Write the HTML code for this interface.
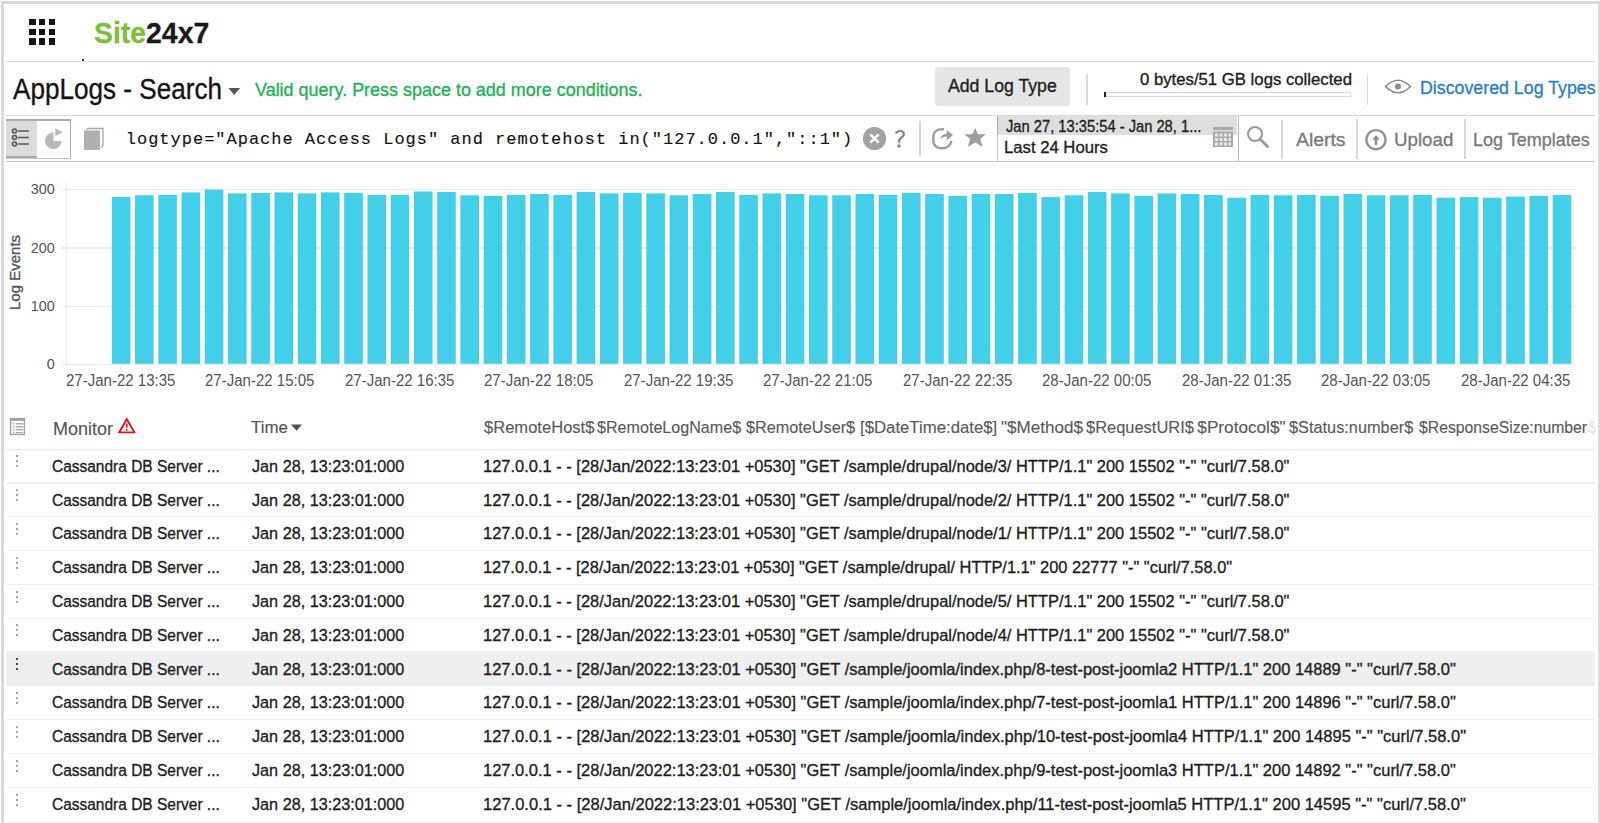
<!DOCTYPE html><html><head><meta charset="utf-8"><style>
html,body{margin:0;padding:0;background:#fff;width:1600px;height:823px;overflow:hidden;position:relative;font-family:"Liberation Sans",sans-serif}
.t{position:absolute;white-space:nowrap;line-height:1;transform-origin:0 0;-webkit-text-stroke-width:0.35px}
.a{position:absolute}
</style></head><body>
<div class="a" style="left:1px;top:1px;width:3px;height:822px;background:#d9d9d9"></div><div class="a" style="left:1px;top:1px;width:1599px;height:3px;background:#d9d9d9"></div><div class="a" style="left:1598px;top:1px;width:2px;height:822px;background:#d9d9d9"></div><div class="a" style="left:29px;top:18.7px;width:6.5px;height:6.4px;background:#151515"></div><div class="a" style="left:38.9px;top:18.7px;width:6.5px;height:6.4px;background:#151515"></div><div class="a" style="left:48.6px;top:18.7px;width:6.5px;height:6.4px;background:#151515"></div><div class="a" style="left:29px;top:28.5px;width:6.5px;height:6.4px;background:#151515"></div><div class="a" style="left:38.9px;top:28.5px;width:6.5px;height:6.4px;background:#151515"></div><div class="a" style="left:48.6px;top:28.5px;width:6.5px;height:6.4px;background:#151515"></div><div class="a" style="left:29px;top:38.3px;width:6.5px;height:6.4px;background:#151515"></div><div class="a" style="left:38.9px;top:38.3px;width:6.5px;height:6.4px;background:#151515"></div><div class="a" style="left:48.6px;top:38.3px;width:6.5px;height:6.4px;background:#151515"></div><div class="t" style="left:93.65px;top:17.90px;font-size:30px;color:#1a1a1a;font-weight:700;transform:scaleX(0.9464);"><span style="color:#7dbf3b">Site</span>24x7</div>
<div class="a" style="left:82px;top:59px;width:2px;height:2px;background:#333"></div><div class="a" style="left:6px;top:60.5px;width:1589px;height:1px;background:#dcdcdc"></div><div class="t" style="left:13.00px;top:74.03px;font-size:29.5px;color:#151515;font-weight:400;transform:scaleX(0.8850);">AppLogs - Search</div>
<svg class="a" style="left:228px;top:87px" width="13" height="9"><path d="M0.5 1 L12 1 L6.25 8 Z" fill="#555"/></svg><div class="t" style="left:255.02px;top:79.62px;font-size:19px;color:#22b257;font-weight:400;transform:scaleX(0.9449);">Valid query. Press space to add more conditions.</div>
<div class="a" style="left:934.5px;top:67px;width:135.5px;height:39px;background:#e6e6e6;border-radius:3px"></div><div class="t" style="left:948.00px;top:76.42px;font-size:19px;color:#1e1e1e;font-weight:400;transform:scaleX(0.9303);">Add Log Type</div>
<div class="a" style="left:1086.2px;top:74.4px;width:1.7px;height:30.3px;background:#dadada"></div><div class="t" style="left:1140.13px;top:71.41px;font-size:17px;color:#1e1e1e;font-weight:400;transform:scaleX(0.9837);">0 bytes/51 GB logs collected</div>
<div class="a" style="left:1104px;top:92px;width:245px;height:3px;border:1px solid #d8d8d8;background:#fff"></div><div class="a" style="left:1104px;top:92px;width:2px;height:5px;background:#222"></div><div class="a" style="left:1366.6px;top:74.6px;width:1.6px;height:30.4px;background:#d8d8d8"></div><svg class="a" style="left:1384px;top:78px" width="28" height="17" viewBox="0 0 28 17"><path d="M1.5 8.5 Q14 -4 26.5 8.5 Q14 21 1.5 8.5 Z" fill="none" stroke="#8a8a8a" stroke-width="1.6"/><circle cx="14" cy="8.5" r="3" fill="#8a8a8a"/></svg><div class="t" style="left:1419.88px;top:77.62px;font-size:19px;color:#2f7fc6;font-weight:400;transform:scaleX(0.9356);">Discovered Log Types</div>
<div class="a" style="left:6px;top:114.5px;width:1589px;height:1.2px;background:#d8d8d8"></div><div class="a" style="left:6px;top:119px;width:64px;height:37px;border-top:2px solid #ababab;border-right:1px solid #b0b0b0;border-bottom:1.5px solid #c4c4c4;background:#fff"></div><div class="a" style="left:6px;top:121px;width:31px;height:35px;background:#dcdcdc;border-bottom:2px solid #ababab"></div><svg class="a" style="left:11px;top:127px" width="20" height="22" viewBox="0 0 20 22"><g fill="none" stroke="#555" stroke-width="1.6"><circle cx="3.5" cy="4" r="2"/><circle cx="3.5" cy="10.5" r="2"/><circle cx="3.5" cy="17" r="2"/><path d="M7 4h11M7 10.5h11M7 17h11"/></g></svg><svg class="a" style="left:44px;top:127px" width="20" height="22" viewBox="0 0 20 22"><path d="M9.5 5.5 A8.3 8.3 0 1 0 17.6 14 L9.5 14 Z" fill="#b9b9b9"/><path d="M11.3 1 L11.3 9.3 L18.5 5.5 Z" fill="#b9b9b9"/></svg><svg class="a" style="left:82px;top:127px" width="24" height="25" viewBox="0 0 24 25"><path d="M4 3 L6 1.5 L21 1.5 L21 19 L19 21" fill="none" stroke="#a8a8a8" stroke-width="1.3"/><rect x="2" y="3.5" width="16" height="19.5" fill="#b0b0b0"/></svg><div class="t" style="left:125.8px;top:131px;font-family:'Liberation Mono',monospace;font-size:17px;letter-spacing:0.99px;color:#111;-webkit-text-stroke:0.12px #111">logtype="Apache Access Logs" and remotehost in("127.0.0.1","::1")</div><svg class="a" style="left:862px;top:126px" width="25" height="25" viewBox="0 0 25 25"><circle cx="12.5" cy="12.5" r="11.6" fill="#a2a2a2"/><path d="M8.3 8.3 L16.7 16.7 M16.7 8.3 L8.3 16.7" stroke="#fff" stroke-width="2.6"/></svg><svg class="a" style="left:893px;top:128px" width="14" height="22" viewBox="0 0 14 22"><path d="M3.2 4.6 Q6 2.2 8.5 3 Q11.2 4 10.8 6.6 Q10.3 8.6 7.8 10.1 Q5.6 11.6 6.1 13.8" fill="none" stroke="#8a8a8a" stroke-width="2.3" stroke-linecap="round"/><circle cx="6" cy="18" r="1.8" fill="#8a8a8a"/></svg><div class="a" style="left:919px;top:121px;width:1.5px;height:35px;background:#d5d5d5"></div><svg class="a" style="left:930px;top:126px" width="25" height="25" viewBox="0 0 25 25"><path d="M14 3.3 Q3.6 2.6 3.3 11 L3.3 14.5 Q3.6 22 11.5 22.3 Q19.5 22.5 21.6 15" fill="none" stroke="#9d9d9d" stroke-width="2.4"/><path d="M10 13 Q12 7.6 16.8 7.5 L16.8 3.9 L23 9 L16.8 14.3 L16.8 10.6 Q13 10.6 10 13 Z" fill="#9d9d9d"/></svg><svg class="a" style="left:963px;top:127px" width="24" height="22" viewBox="0 0 24 22"><path d="M12.2 0.8 L14.9 7.3 L22.6 7.3 L17.3 12 L19.5 19.8 L12.2 15.4 L4.9 19.8 L7.1 12 L1.4 7.3 L9.5 7.3 Z" fill="#9d9d9d"/></svg><div class="a" style="left:997px;top:116px;width:240px;height:44.5px;border-left:1px solid #c8c8c8;border-right:1px solid #b8b8b8;background:#fff"></div><div class="a" style="left:998px;top:116px;width:239px;height:18.5px;background:#dedede"></div><div class="t" style="left:1005.71px;top:118.81px;font-size:15.7px;color:#1e1e1e;font-weight:400;transform:scaleX(0.9375);">Jan 27, 13:35:54 - Jan 28, 1...</div>
<div class="t" style="left:1003.66px;top:139.27px;font-size:17.4px;color:#1e1e1e;font-weight:400;transform:scaleX(0.9594);">Last 24 Hours</div>
<div class="a" style="left:997px;top:116px;width:1px;height:18.5px;background:#a8a8a8"></div><svg class="a" style="left:1212px;top:125px" width="22" height="23" viewBox="0 0 22 23"><rect x="1" y="2" width="20" height="3" fill="#aaa"/><rect x="1" y="6.5" width="20" height="15.5" fill="#aaa"/><g fill="#e8e8e8"><rect x="3" y="8.5" width="3" height="3"/><rect x="7.5" y="8.5" width="3" height="3"/><rect x="12" y="8.5" width="3" height="3"/><rect x="16.5" y="8.5" width="2.5" height="3"/><rect x="3" y="13" width="3" height="3"/><rect x="7.5" y="13" width="3" height="3"/><rect x="12" y="13" width="3" height="3"/><rect x="16.5" y="13" width="2.5" height="3"/><rect x="3" y="17.5" width="3" height="3"/><rect x="7.5" y="17.5" width="3" height="3"/><rect x="12" y="17.5" width="3" height="3"/><rect x="16.5" y="17.5" width="2.5" height="3"/></g></svg><svg class="a" style="left:1246px;top:125px" width="24" height="24" viewBox="0 0 24 24"><circle cx="9" cy="9" r="7" fill="none" stroke="#9a9a9a" stroke-width="2"/><path d="M14 14 L21.5 21.5" stroke="#9a9a9a" stroke-width="3" stroke-linecap="round"/></svg><div class="a" style="left:1281.2px;top:119.8px;width:1.5px;height:39.2px;background:#d8d8d8"></div><div class="t" style="left:1295.60px;top:130.42px;font-size:19px;color:#7a7a7a;font-weight:400;transform:scaleX(1.0192);">Alerts</div>
<div class="a" style="left:1356px;top:119px;width:1.5px;height:40px;background:#d8d8d8"></div><svg class="a" style="left:1364px;top:127.5px" width="24" height="24" viewBox="0 0 24 24"><circle cx="12" cy="11.7" r="9.6" fill="none" stroke="#959595" stroke-width="2.4"/><path d="M12 16.8 V10" stroke="#8a8a8a" stroke-width="2.6"/><path d="M8 11.4 L12 7.2 L16 11.4 Z" fill="#8a8a8a"/></svg><div class="t" style="left:1394.10px;top:130.42px;font-size:19px;color:#7a7a7a;font-weight:400;transform:scaleX(0.9847);">Upload</div>
<div class="a" style="left:1464.2px;top:119px;width:1.5px;height:40px;background:#d8d8d8"></div><div class="t" style="left:1472.96px;top:130.42px;font-size:19px;color:#7a7a7a;font-weight:400;transform:scaleX(0.9469);">Log Templates</div>
<div class="a" style="left:6px;top:161px;width:1589px;height:1.2px;background:#c8c8c8"></div><div class="a" style="left:61px;top:188.75px;width:1515px;height:1.5px;background:#ebebeb"></div><div class="t" style="left:30.73px;top:182.41px;font-size:14.4px;color:#555;font-weight:400;-webkit-text-stroke-width:0;">300</div>
<div class="a" style="left:61px;top:247.25px;width:1515px;height:1.5px;background:#ebebeb"></div><div class="t" style="left:30.73px;top:240.91px;font-size:14.4px;color:#555;font-weight:400;-webkit-text-stroke-width:0;">200</div>
<div class="a" style="left:61px;top:305.75px;width:1515px;height:1.5px;background:#ebebeb"></div><div class="t" style="left:30.73px;top:299.41px;font-size:14.4px;color:#555;font-weight:400;-webkit-text-stroke-width:0;">100</div>
<div class="a" style="left:61px;top:363.55px;width:1515px;height:1.5px;background:#ebebeb"></div><div class="t" style="left:46.71px;top:357.21px;font-size:14.4px;color:#555;font-weight:400;-webkit-text-stroke-width:0;">0</div>
<div class="a" style="left:65.75px;top:182px;width:1.5px;height:183px;background:#ebebeb"></div><div class="t" style="left:6.8px;top:309.5px;font-size:15px;color:#555;transform:rotate(-90deg);transform-origin:0 0">Log Events</div><svg class="a" style="left:61px;top:180px" width="1530" height="190"><g fill="#43cfe8"><rect x="50.80" y="16.90" width="18.6" height="166.90"/><rect x="74.04" y="15.25" width="18.6" height="168.55"/><rect x="97.28" y="14.90" width="18.6" height="168.90"/><rect x="120.52" y="12.40" width="18.6" height="171.40"/><rect x="143.76" y="9.60" width="18.6" height="174.20"/><rect x="167.00" y="13.40" width="18.6" height="170.40"/><rect x="190.24" y="13.00" width="18.6" height="170.80"/><rect x="213.48" y="12.40" width="18.6" height="171.40"/><rect x="236.72" y="13.40" width="18.6" height="170.40"/><rect x="259.96" y="12.40" width="18.6" height="171.40"/><rect x="283.20" y="12.80" width="18.6" height="171.00"/><rect x="306.44" y="14.90" width="18.6" height="168.90"/><rect x="329.68" y="14.90" width="18.6" height="168.90"/><rect x="352.92" y="11.50" width="18.6" height="172.30"/><rect x="376.16" y="11.90" width="18.6" height="171.90"/><rect x="399.40" y="15.30" width="18.6" height="168.50"/><rect x="422.64" y="15.80" width="18.6" height="168.00"/><rect x="445.88" y="14.90" width="18.6" height="168.90"/><rect x="469.12" y="14.00" width="18.6" height="169.80"/><rect x="492.36" y="14.90" width="18.6" height="168.90"/><rect x="515.60" y="11.90" width="18.6" height="171.90"/><rect x="538.84" y="13.40" width="18.6" height="170.40"/><rect x="562.08" y="12.80" width="18.6" height="171.00"/><rect x="585.32" y="13.40" width="18.6" height="170.40"/><rect x="608.56" y="15.30" width="18.6" height="168.50"/><rect x="631.80" y="14.00" width="18.6" height="169.80"/><rect x="655.04" y="11.90" width="18.6" height="171.90"/><rect x="678.28" y="14.90" width="18.6" height="168.90"/><rect x="701.52" y="13.40" width="18.6" height="170.40"/><rect x="724.76" y="14.00" width="18.6" height="169.80"/><rect x="748.00" y="15.30" width="18.6" height="168.50"/><rect x="771.24" y="15.30" width="18.6" height="168.50"/><rect x="794.48" y="14.00" width="18.6" height="169.80"/><rect x="817.72" y="14.90" width="18.6" height="168.90"/><rect x="840.96" y="12.80" width="18.6" height="171.00"/><rect x="864.20" y="14.00" width="18.6" height="169.80"/><rect x="887.44" y="15.80" width="18.6" height="168.00"/><rect x="910.68" y="14.00" width="18.6" height="169.80"/><rect x="933.92" y="14.00" width="18.6" height="169.80"/><rect x="957.16" y="13.00" width="18.6" height="170.80"/><rect x="980.40" y="17.10" width="18.6" height="166.70"/><rect x="1003.64" y="15.30" width="18.6" height="168.50"/><rect x="1026.88" y="11.90" width="18.6" height="171.90"/><rect x="1050.12" y="13.40" width="18.6" height="170.40"/><rect x="1073.36" y="15.80" width="18.6" height="168.00"/><rect x="1096.60" y="13.40" width="18.6" height="170.40"/><rect x="1119.84" y="14.00" width="18.6" height="169.80"/><rect x="1143.08" y="14.90" width="18.6" height="168.90"/><rect x="1166.32" y="17.70" width="18.6" height="166.10"/><rect x="1189.56" y="14.90" width="18.6" height="168.90"/><rect x="1212.80" y="15.30" width="18.6" height="168.50"/><rect x="1236.04" y="14.90" width="18.6" height="168.90"/><rect x="1259.28" y="15.80" width="18.6" height="168.00"/><rect x="1282.52" y="14.00" width="18.6" height="169.80"/><rect x="1305.76" y="15.30" width="18.6" height="168.50"/><rect x="1329.00" y="15.30" width="18.6" height="168.50"/><rect x="1352.24" y="14.90" width="18.6" height="168.90"/><rect x="1375.48" y="17.70" width="18.6" height="166.10"/><rect x="1398.72" y="17.10" width="18.6" height="166.70"/><rect x="1421.96" y="17.70" width="18.6" height="166.10"/><rect x="1445.20" y="16.60" width="18.6" height="167.20"/><rect x="1468.44" y="15.80" width="18.6" height="168.00"/><rect x="1491.68" y="14.90" width="18.6" height="168.90"/></g></svg><div class="a" style="left:120.30px;top:365px;width:1px;height:3.5px;background:#ececec"></div><div class="t" style="left:65.95px;top:372.79px;font-size:15.6px;color:#555;font-weight:400;transform:scaleX(0.9633);-webkit-text-stroke-width:0;">27-Jan-22 13:35</div>
<div class="a" style="left:259.80px;top:365px;width:1px;height:3.5px;background:#ececec"></div><div class="t" style="left:205.45px;top:372.79px;font-size:15.6px;color:#555;font-weight:400;transform:scaleX(0.9633);-webkit-text-stroke-width:0;">27-Jan-22 15:05</div>
<div class="a" style="left:399.30px;top:365px;width:1px;height:3.5px;background:#ececec"></div><div class="t" style="left:344.95px;top:372.79px;font-size:15.6px;color:#555;font-weight:400;transform:scaleX(0.9633);-webkit-text-stroke-width:0;">27-Jan-22 16:35</div>
<div class="a" style="left:538.80px;top:365px;width:1px;height:3.5px;background:#ececec"></div><div class="t" style="left:484.45px;top:372.79px;font-size:15.6px;color:#555;font-weight:400;transform:scaleX(0.9633);-webkit-text-stroke-width:0;">27-Jan-22 18:05</div>
<div class="a" style="left:678.30px;top:365px;width:1px;height:3.5px;background:#ececec"></div><div class="t" style="left:623.95px;top:372.79px;font-size:15.6px;color:#555;font-weight:400;transform:scaleX(0.9633);-webkit-text-stroke-width:0;">27-Jan-22 19:35</div>
<div class="a" style="left:817.80px;top:365px;width:1px;height:3.5px;background:#ececec"></div><div class="t" style="left:763.45px;top:372.79px;font-size:15.6px;color:#555;font-weight:400;transform:scaleX(0.9633);-webkit-text-stroke-width:0;">27-Jan-22 21:05</div>
<div class="a" style="left:957.30px;top:365px;width:1px;height:3.5px;background:#ececec"></div><div class="t" style="left:902.95px;top:372.79px;font-size:15.6px;color:#555;font-weight:400;transform:scaleX(0.9633);-webkit-text-stroke-width:0;">27-Jan-22 22:35</div>
<div class="a" style="left:1096.80px;top:365px;width:1px;height:3.5px;background:#ececec"></div><div class="t" style="left:1042.45px;top:372.79px;font-size:15.6px;color:#555;font-weight:400;transform:scaleX(0.9633);-webkit-text-stroke-width:0;">28-Jan-22 00:05</div>
<div class="a" style="left:1236.30px;top:365px;width:1px;height:3.5px;background:#ececec"></div><div class="t" style="left:1181.95px;top:372.79px;font-size:15.6px;color:#555;font-weight:400;transform:scaleX(0.9633);-webkit-text-stroke-width:0;">28-Jan-22 01:35</div>
<div class="a" style="left:1375.80px;top:365px;width:1px;height:3.5px;background:#ececec"></div><div class="t" style="left:1321.45px;top:372.79px;font-size:15.6px;color:#555;font-weight:400;transform:scaleX(0.9633);-webkit-text-stroke-width:0;">28-Jan-22 03:05</div>
<div class="a" style="left:1515.30px;top:365px;width:1px;height:3.5px;background:#ececec"></div><div class="t" style="left:1460.95px;top:372.79px;font-size:15.6px;color:#555;font-weight:400;transform:scaleX(0.9633);-webkit-text-stroke-width:0;">28-Jan-22 04:35</div>
<svg class="a" style="left:9px;top:417px" width="18" height="19" viewBox="0 0 18 19"><rect x="1.6" y="1.6" width="13.8" height="15.8" fill="#fff" stroke="#a0a0a0" stroke-width="1.4"/><rect x="1.5" y="1.5" width="14" height="2.3" fill="#a0a0a0"/><g fill="#aaa"><rect x="4" y="6" width="1.5" height="1.5"/><rect x="7" y="6" width="7" height="1.5"/><rect x="4" y="9" width="1.5" height="1.5"/><rect x="7" y="9" width="7" height="1.5"/><rect x="4" y="12" width="1.5" height="1.5"/><rect x="7" y="12" width="7" height="1.5"/><rect x="4" y="15" width="1.5" height="1"/><rect x="7" y="15" width="7" height="1"/></g></svg><div class="t" style="left:52.76px;top:420.52px;font-size:17.7px;color:#555;font-weight:400;transform:scaleX(1.0166);-webkit-text-stroke-width:0.15px;">Monitor</div>
<svg class="a" style="left:117px;top:417px" width="19" height="18" viewBox="0 0 19 18"><path d="M9.8 2.2 L17.4 15.4 L2.2 15.4 Z" fill="none" stroke="#ee1111" stroke-width="1.9" stroke-linejoin="miter"/><path d="M9.8 6.5 V10.8" stroke="#ee1111" stroke-width="1.6"/><rect x="9" y="12" width="1.6" height="1.6" fill="#ee1111"/></svg><div class="t" style="left:250.66px;top:418.51px;font-size:17px;color:#555;font-weight:400;transform:scaleX(0.9933);-webkit-text-stroke-width:0.15px;">Time</div>
<svg class="a" style="left:290px;top:424px" width="13" height="8"><path d="M1 0.5 L12 0.5 L6.5 6.8 Z" fill="#555"/></svg><div class="t" style="left:483.58px;top:419.44px;font-size:17.2px;color:#5a5a5a;font-weight:400;transform:scaleX(0.9632);-webkit-text-stroke-width:0.15px;">$RemoteHost$</div>
<div class="t" style="left:597.34px;top:419.44px;font-size:17.2px;color:#5a5a5a;font-weight:400;transform:scaleX(0.9369);-webkit-text-stroke-width:0.15px;">$RemoteLogName$</div>
<div class="t" style="left:746.09px;top:419.44px;font-size:17.2px;color:#5a5a5a;font-weight:400;transform:scaleX(0.9437);-webkit-text-stroke-width:0.15px;">$RemoteUser$</div>
<div class="t" style="left:860.08px;top:419.44px;font-size:17.2px;color:#5a5a5a;font-weight:400;transform:scaleX(0.9750);-webkit-text-stroke-width:0.15px;">[$DateTime:date$]</div>
<div class="t" style="left:1000.57px;top:419.44px;font-size:17.2px;color:#5a5a5a;font-weight:400;transform:scaleX(0.9945);-webkit-text-stroke-width:0.15px;">"$Method$</div>
<div class="t" style="left:1086.09px;top:419.44px;font-size:17.2px;color:#5a5a5a;font-weight:400;transform:scaleX(0.9571);-webkit-text-stroke-width:0.15px;">$RequestURI$</div>
<div class="t" style="left:1197.33px;top:419.44px;font-size:17.2px;color:#5a5a5a;font-weight:400;-webkit-text-stroke-width:0.15px;">$Protocol$"</div>
<div class="t" style="left:1289.34px;top:419.44px;font-size:17.2px;color:#5a5a5a;font-weight:400;transform:scaleX(0.9491);-webkit-text-stroke-width:0.15px;">$Status:number$</div>
<div class="t" style="left:1418.84px;top:419.44px;font-size:17.2px;color:#5a5a5a;font-weight:400;transform:scaleX(0.9160);-webkit-text-stroke-width:0.15px;">$ResponseSize:number</div>
<div class="t" style="left:1588.88px;top:419.44px;font-size:17.2px;color:#e6e6e6;font-weight:400;transform:scaleX(0.7130);">$</div>
<div class="a" style="left:6px;top:448.50px;width:1589px;height:1.5px;background:#e9e9e9"></div><div class="a" style="left:6px;top:482.32px;width:1589px;height:1.2px;background:#efefef"></div><div class="a" style="left:15.5px;top:455.0px;width:2.2px;height:2.2px;border-radius:50%;background:#8a8a8a"></div><div class="a" style="left:15.5px;top:460.1px;width:2.2px;height:2.2px;border-radius:50%;background:#8a8a8a"></div><div class="a" style="left:15.5px;top:465.2px;width:2.2px;height:2.2px;border-radius:50%;background:#8a8a8a"></div><div class="t" style="left:52.23px;top:457.74px;font-size:17.2px;color:#1e1e1e;font-weight:400;transform:scaleX(0.9006);">Cassandra DB Server ...</div>
<div class="t" style="left:251.68px;top:457.74px;font-size:17.2px;color:#1e1e1e;font-weight:400;transform:scaleX(0.9431);">Jan 28, 13:23:01:000</div>
<div class="t" style="left:483.28px;top:457.74px;font-size:17.2px;color:#1e1e1e;font-weight:400;transform:scaleX(0.9575);">127.0.0.1 - - [28/Jan/2022:13:23:01 +0530] "GET /sample/drupal/node/3/ HTTP/1.1" 200 15502 "-" "curl/7.58.0"</div>
<div class="a" style="left:6px;top:516.14px;width:1589px;height:1.2px;background:#efefef"></div><div class="a" style="left:15.5px;top:489.0px;width:2.2px;height:2.2px;border-radius:50%;background:#8a8a8a"></div><div class="a" style="left:15.5px;top:494.1px;width:2.2px;height:2.2px;border-radius:50%;background:#8a8a8a"></div><div class="a" style="left:15.5px;top:499.2px;width:2.2px;height:2.2px;border-radius:50%;background:#8a8a8a"></div><div class="t" style="left:52.23px;top:491.56px;font-size:17.2px;color:#1e1e1e;font-weight:400;transform:scaleX(0.9006);">Cassandra DB Server ...</div>
<div class="t" style="left:251.68px;top:491.56px;font-size:17.2px;color:#1e1e1e;font-weight:400;transform:scaleX(0.9431);">Jan 28, 13:23:01:000</div>
<div class="t" style="left:483.28px;top:491.56px;font-size:17.2px;color:#1e1e1e;font-weight:400;transform:scaleX(0.9575);">127.0.0.1 - - [28/Jan/2022:13:23:01 +0530] "GET /sample/drupal/node/2/ HTTP/1.1" 200 15502 "-" "curl/7.58.0"</div>
<div class="a" style="left:6px;top:549.96px;width:1589px;height:1.2px;background:#efefef"></div><div class="a" style="left:15.5px;top:523.0px;width:2.2px;height:2.2px;border-radius:50%;background:#8a8a8a"></div><div class="a" style="left:15.5px;top:528.1px;width:2.2px;height:2.2px;border-radius:50%;background:#8a8a8a"></div><div class="a" style="left:15.5px;top:533.2px;width:2.2px;height:2.2px;border-radius:50%;background:#8a8a8a"></div><div class="t" style="left:52.23px;top:525.38px;font-size:17.2px;color:#1e1e1e;font-weight:400;transform:scaleX(0.9006);">Cassandra DB Server ...</div>
<div class="t" style="left:251.68px;top:525.38px;font-size:17.2px;color:#1e1e1e;font-weight:400;transform:scaleX(0.9431);">Jan 28, 13:23:01:000</div>
<div class="t" style="left:483.28px;top:525.38px;font-size:17.2px;color:#1e1e1e;font-weight:400;transform:scaleX(0.9575);">127.0.0.1 - - [28/Jan/2022:13:23:01 +0530] "GET /sample/drupal/node/1/ HTTP/1.1" 200 15502 "-" "curl/7.58.0"</div>
<div class="a" style="left:6px;top:583.78px;width:1589px;height:1.2px;background:#efefef"></div><div class="a" style="left:15.5px;top:557.0px;width:2.2px;height:2.2px;border-radius:50%;background:#8a8a8a"></div><div class="a" style="left:15.5px;top:562.1px;width:2.2px;height:2.2px;border-radius:50%;background:#8a8a8a"></div><div class="a" style="left:15.5px;top:567.2px;width:2.2px;height:2.2px;border-radius:50%;background:#8a8a8a"></div><div class="t" style="left:52.23px;top:559.20px;font-size:17.2px;color:#1e1e1e;font-weight:400;transform:scaleX(0.9006);">Cassandra DB Server ...</div>
<div class="t" style="left:251.68px;top:559.20px;font-size:17.2px;color:#1e1e1e;font-weight:400;transform:scaleX(0.9431);">Jan 28, 13:23:01:000</div>
<div class="t" style="left:483.29px;top:559.20px;font-size:17.2px;color:#1e1e1e;font-weight:400;transform:scaleX(0.9544);">127.0.0.1 - - [28/Jan/2022:13:23:01 +0530] "GET /sample/drupal/ HTTP/1.1" 200 22777 "-" "curl/7.58.0"</div>
<div class="a" style="left:6px;top:617.60px;width:1589px;height:1.2px;background:#efefef"></div><div class="a" style="left:15.5px;top:591.0px;width:2.2px;height:2.2px;border-radius:50%;background:#8a8a8a"></div><div class="a" style="left:15.5px;top:596.1px;width:2.2px;height:2.2px;border-radius:50%;background:#8a8a8a"></div><div class="a" style="left:15.5px;top:601.2px;width:2.2px;height:2.2px;border-radius:50%;background:#8a8a8a"></div><div class="t" style="left:52.23px;top:593.02px;font-size:17.2px;color:#1e1e1e;font-weight:400;transform:scaleX(0.9006);">Cassandra DB Server ...</div>
<div class="t" style="left:251.68px;top:593.02px;font-size:17.2px;color:#1e1e1e;font-weight:400;transform:scaleX(0.9431);">Jan 28, 13:23:01:000</div>
<div class="t" style="left:483.28px;top:593.02px;font-size:17.2px;color:#1e1e1e;font-weight:400;transform:scaleX(0.9575);">127.0.0.1 - - [28/Jan/2022:13:23:01 +0530] "GET /sample/drupal/node/5/ HTTP/1.1" 200 15502 "-" "curl/7.58.0"</div>
<div class="a" style="left:6px;top:651.42px;width:1589px;height:1.2px;background:#efefef"></div><div class="a" style="left:15.5px;top:624.0px;width:2.2px;height:2.2px;border-radius:50%;background:#8a8a8a"></div><div class="a" style="left:15.5px;top:629.1px;width:2.2px;height:2.2px;border-radius:50%;background:#8a8a8a"></div><div class="a" style="left:15.5px;top:634.2px;width:2.2px;height:2.2px;border-radius:50%;background:#8a8a8a"></div><div class="t" style="left:52.23px;top:626.84px;font-size:17.2px;color:#1e1e1e;font-weight:400;transform:scaleX(0.9006);">Cassandra DB Server ...</div>
<div class="t" style="left:251.68px;top:626.84px;font-size:17.2px;color:#1e1e1e;font-weight:400;transform:scaleX(0.9431);">Jan 28, 13:23:01:000</div>
<div class="t" style="left:483.28px;top:626.84px;font-size:17.2px;color:#1e1e1e;font-weight:400;transform:scaleX(0.9575);">127.0.0.1 - - [28/Jan/2022:13:23:01 +0530] "GET /sample/drupal/node/4/ HTTP/1.1" 200 15502 "-" "curl/7.58.0"</div>
<div class="a" style="left:6px;top:652.67px;width:1589px;height:32.32px;background:#efefef"></div><div class="a" style="left:6px;top:685.24px;width:1589px;height:1.2px;background:#efefef"></div><div class="a" style="left:15.5px;top:658.0px;width:2.2px;height:2.2px;border-radius:50%;background:#111"></div><div class="a" style="left:15.5px;top:663.1px;width:2.2px;height:2.2px;border-radius:50%;background:#111"></div><div class="a" style="left:15.5px;top:668.2px;width:2.2px;height:2.2px;border-radius:50%;background:#111"></div><div class="t" style="left:52.23px;top:660.66px;font-size:17.2px;color:#1e1e1e;font-weight:400;transform:scaleX(0.9006);">Cassandra DB Server ...</div>
<div class="t" style="left:251.68px;top:660.66px;font-size:17.2px;color:#1e1e1e;font-weight:400;transform:scaleX(0.9431);">Jan 28, 13:23:01:000</div>
<div class="t" style="left:483.28px;top:660.66px;font-size:17.2px;color:#1e1e1e;font-weight:400;transform:scaleX(0.9592);">127.0.0.1 - - [28/Jan/2022:13:23:01 +0530] "GET /sample/joomla/index.php/8-test-post-joomla2 HTTP/1.1" 200 14889 "-" "curl/7.58.0"</div>
<div class="a" style="left:6px;top:719.06px;width:1589px;height:1.2px;background:#efefef"></div><div class="a" style="left:15.5px;top:692.0px;width:2.2px;height:2.2px;border-radius:50%;background:#8a8a8a"></div><div class="a" style="left:15.5px;top:697.1px;width:2.2px;height:2.2px;border-radius:50%;background:#8a8a8a"></div><div class="a" style="left:15.5px;top:702.2px;width:2.2px;height:2.2px;border-radius:50%;background:#8a8a8a"></div><div class="t" style="left:52.23px;top:694.48px;font-size:17.2px;color:#1e1e1e;font-weight:400;transform:scaleX(0.9006);">Cassandra DB Server ...</div>
<div class="t" style="left:251.68px;top:694.48px;font-size:17.2px;color:#1e1e1e;font-weight:400;transform:scaleX(0.9431);">Jan 28, 13:23:01:000</div>
<div class="t" style="left:483.28px;top:694.48px;font-size:17.2px;color:#1e1e1e;font-weight:400;transform:scaleX(0.9592);">127.0.0.1 - - [28/Jan/2022:13:23:01 +0530] "GET /sample/joomla/index.php/7-test-post-joomla1 HTTP/1.1" 200 14896 "-" "curl/7.58.0"</div>
<div class="a" style="left:6px;top:752.88px;width:1589px;height:1.2px;background:#efefef"></div><div class="a" style="left:15.5px;top:726.0px;width:2.2px;height:2.2px;border-radius:50%;background:#8a8a8a"></div><div class="a" style="left:15.5px;top:731.1px;width:2.2px;height:2.2px;border-radius:50%;background:#8a8a8a"></div><div class="a" style="left:15.5px;top:736.2px;width:2.2px;height:2.2px;border-radius:50%;background:#8a8a8a"></div><div class="t" style="left:52.23px;top:728.30px;font-size:17.2px;color:#1e1e1e;font-weight:400;transform:scaleX(0.9006);">Cassandra DB Server ...</div>
<div class="t" style="left:251.68px;top:728.30px;font-size:17.2px;color:#1e1e1e;font-weight:400;transform:scaleX(0.9431);">Jan 28, 13:23:01:000</div>
<div class="t" style="left:483.28px;top:728.30px;font-size:17.2px;color:#1e1e1e;font-weight:400;transform:scaleX(0.9602);">127.0.0.1 - - [28/Jan/2022:13:23:01 +0530] "GET /sample/joomla/index.php/10-test-post-joomla4 HTTP/1.1" 200 14895 "-" "curl/7.58.0"</div>
<div class="a" style="left:6px;top:786.70px;width:1589px;height:1.2px;background:#efefef"></div><div class="a" style="left:15.5px;top:760.0px;width:2.2px;height:2.2px;border-radius:50%;background:#8a8a8a"></div><div class="a" style="left:15.5px;top:765.1px;width:2.2px;height:2.2px;border-radius:50%;background:#8a8a8a"></div><div class="a" style="left:15.5px;top:770.2px;width:2.2px;height:2.2px;border-radius:50%;background:#8a8a8a"></div><div class="t" style="left:52.23px;top:762.12px;font-size:17.2px;color:#1e1e1e;font-weight:400;transform:scaleX(0.9006);">Cassandra DB Server ...</div>
<div class="t" style="left:251.68px;top:762.12px;font-size:17.2px;color:#1e1e1e;font-weight:400;transform:scaleX(0.9431);">Jan 28, 13:23:01:000</div>
<div class="t" style="left:483.28px;top:762.12px;font-size:17.2px;color:#1e1e1e;font-weight:400;transform:scaleX(0.9592);">127.0.0.1 - - [28/Jan/2022:13:23:01 +0530] "GET /sample/joomla/index.php/9-test-post-joomla3 HTTP/1.1" 200 14892 "-" "curl/7.58.0"</div>
<div class="a" style="left:6px;top:820.52px;width:1589px;height:1.2px;background:#efefef"></div><div class="a" style="left:15.5px;top:794.0px;width:2.2px;height:2.2px;border-radius:50%;background:#8a8a8a"></div><div class="a" style="left:15.5px;top:799.1px;width:2.2px;height:2.2px;border-radius:50%;background:#8a8a8a"></div><div class="a" style="left:15.5px;top:804.2px;width:2.2px;height:2.2px;border-radius:50%;background:#8a8a8a"></div><div class="t" style="left:52.23px;top:795.94px;font-size:17.2px;color:#1e1e1e;font-weight:400;transform:scaleX(0.9006);">Cassandra DB Server ...</div>
<div class="t" style="left:251.68px;top:795.94px;font-size:17.2px;color:#1e1e1e;font-weight:400;transform:scaleX(0.9431);">Jan 28, 13:23:01:000</div>
<div class="t" style="left:483.28px;top:795.94px;font-size:17.2px;color:#1e1e1e;font-weight:400;transform:scaleX(0.9613);">127.0.0.1 - - [28/Jan/2022:13:23:01 +0530] "GET /sample/joomla/index.php/11-test-post-joomla5 HTTP/1.1" 200 14595 "-" "curl/7.58.0"</div>
</body></html>
